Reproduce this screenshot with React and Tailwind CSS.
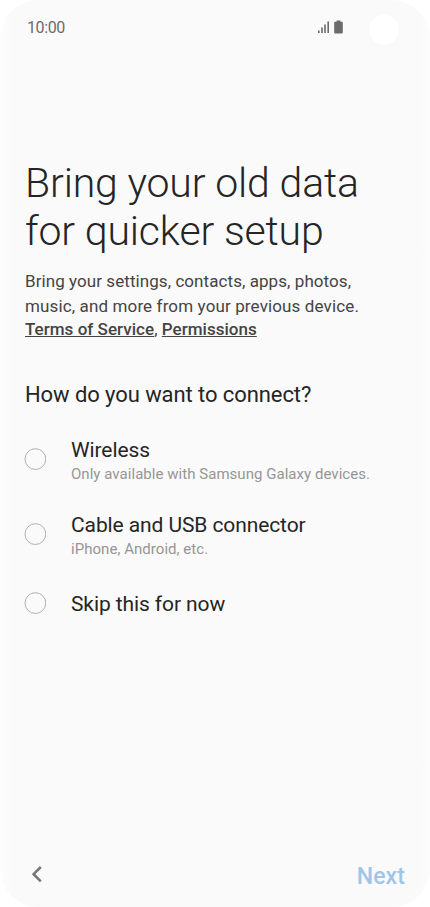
import React, { useState } from "react";

const OPTIONS = [
  {
    id: "wireless",
    title: "Wireless",
    hint: "Only available with Samsung Galaxy devices.",
    row: "h-[75px]",
  },
  {
    id: "cable",
    title: "Cable and USB connector",
    hint: "iPhone, Android, etc.",
    row: "h-[79px]",
  },
  { id: "skip", title: "Skip this for now", row: "h-[48px]" },
];

const StatusBar = () => (
  <div className="flex h-[60px] items-start justify-between pl-[27px] pr-[31px] text-[#6b6b6b]">
    <span className="mt-[16px] text-[16px] leading-6 tracking-[-0.4px]">10:00</span>
    <div className="flex items-start">
      {/* Signal strength */}
      <svg className="mt-[21px]" width="12" height="13" viewBox="0 0 12 13" fill="currentColor">
        <rect x="0" y="9.5" width="1.6" height="2.5" />
        <rect x="3.2" y="6.5" width="1.6" height="5.5" />
        <rect x="6.2" y="3.5" width="1.6" height="8.5" />
        <rect x="9.4" y="0.5" width="1.6" height="11.5" />
      </svg>
      {/* Battery */}
      <svg className="ml-[4px] mt-[20px]" width="9" height="14" viewBox="0 0 9 14" fill="currentColor">
        <path d="M2.6 0.4h3.8v1.4h1.6q0.8 0 0.8 0.8v10q0 0.8-0.8 0.8h-7q-0.8 0-0.8-0.8v-10q0-0.8 0.8-0.8h1.6z" />
      </svg>
      {/* Camera cutout */}
      <div className="ml-[26px] mt-[15px] size-[30px] rounded-full bg-white" />
    </div>
  </div>
);

const Radio = ({ checked }) => (
  <svg width="22" height="22" viewBox="0 0 22 22" fill="none">
    <circle cx="11.4" cy="11.1" r="10.4" stroke="#a8a8a8" strokeWidth="0.9" />
    {checked && <circle cx="11.4" cy="11.1" r="6" fill="#3e91ff" />}
  </svg>
);

const Option = ({ option, checked, onSelect }) => (
  <button
    type="button"
    onClick={() => onSelect(option.id)}
    className={`flex w-full items-start text-left ${option.row}`}
  >
    <span className={`size-[22px] shrink-0 ${option.hint ? "mt-[12px]" : "mt-[2px]"}`}>
      <Radio checked={checked} />
    </span>
    <span className="ml-[25px] block whitespace-nowrap">
      <span className="block text-[21px] leading-[28px] tracking-[-0.1px] text-[#252525]">{option.title}</span>
      {option.hint && (
        <span className="block text-[15px] leading-[20px] tracking-[0.04px] text-[#969696]">{option.hint}</span>
      )}
    </span>
  </button>
);

const App = () => {
  const [selected, setSelected] = useState(null);

  return (
    <div className="h-[907px] w-[430px] bg-white font-['Roboto',sans-serif]">
      <div className="flex h-full flex-col overflow-hidden rounded-[38px] bg-[linear-gradient(to_right,#fdfdfd_0,#fafafa_12px,#fafafa_420px,#fcfcfc_430px)]">
        <StatusBar />

        <main className="flex-1 pl-[25px] pt-[99px]">
          <h1 className="whitespace-nowrap text-[41px] font-light leading-[48px] tracking-[-0.16px] text-[#252525]">
            Bring your old data
            <br />
            for quicker setup
          </h1>

          <p className="mt-[14px] whitespace-nowrap text-[17px] text-[#444444]">
            <span className="block leading-[24px] tracking-[0.07px]">Bring your settings, contacts, apps, photos,</span>
            <span className="block leading-[26px] tracking-[0.13px]">music, and more from your previous device.</span>
            <span className="block leading-[20px] tracking-[0.03px]">
              <a className="font-medium underline">Terms of Service</a>,{" "}
              <a className="font-medium underline">Permissions</a>
            </span>
          </p>

          <h2 className="mt-[41px] whitespace-nowrap text-[22px] leading-[30px] tracking-[-0.08px] text-[#252525]">
            How do you want to connect?
          </h2>

          <div className="-ml-px mt-[26px]">
            {OPTIONS.map((option) => (
              <Option
                key={option.id}
                option={option}
                checked={selected === option.id}
                onSelect={setSelected}
              />
            ))}
          </div>
        </main>

        <footer className="flex h-[64px] items-start justify-between pl-[31px] pr-[25px]">
          <button type="button" aria-label="Back" className="mt-[22px]">
            <svg width="12" height="18" viewBox="0 0 12 18" fill="none" stroke="#777777" strokeWidth="2.6">
              <path d="M9.8 2L2.6 9.2L9.8 16.4" />
            </svg>
          </button>
          <button type="button" className="mt-[19px] text-[23px] font-medium leading-[30px] tracking-[0.1px] text-[#9fc6e8]">
            Next
          </button>
        </footer>
      </div>
    </div>
  );
};

export default App;
